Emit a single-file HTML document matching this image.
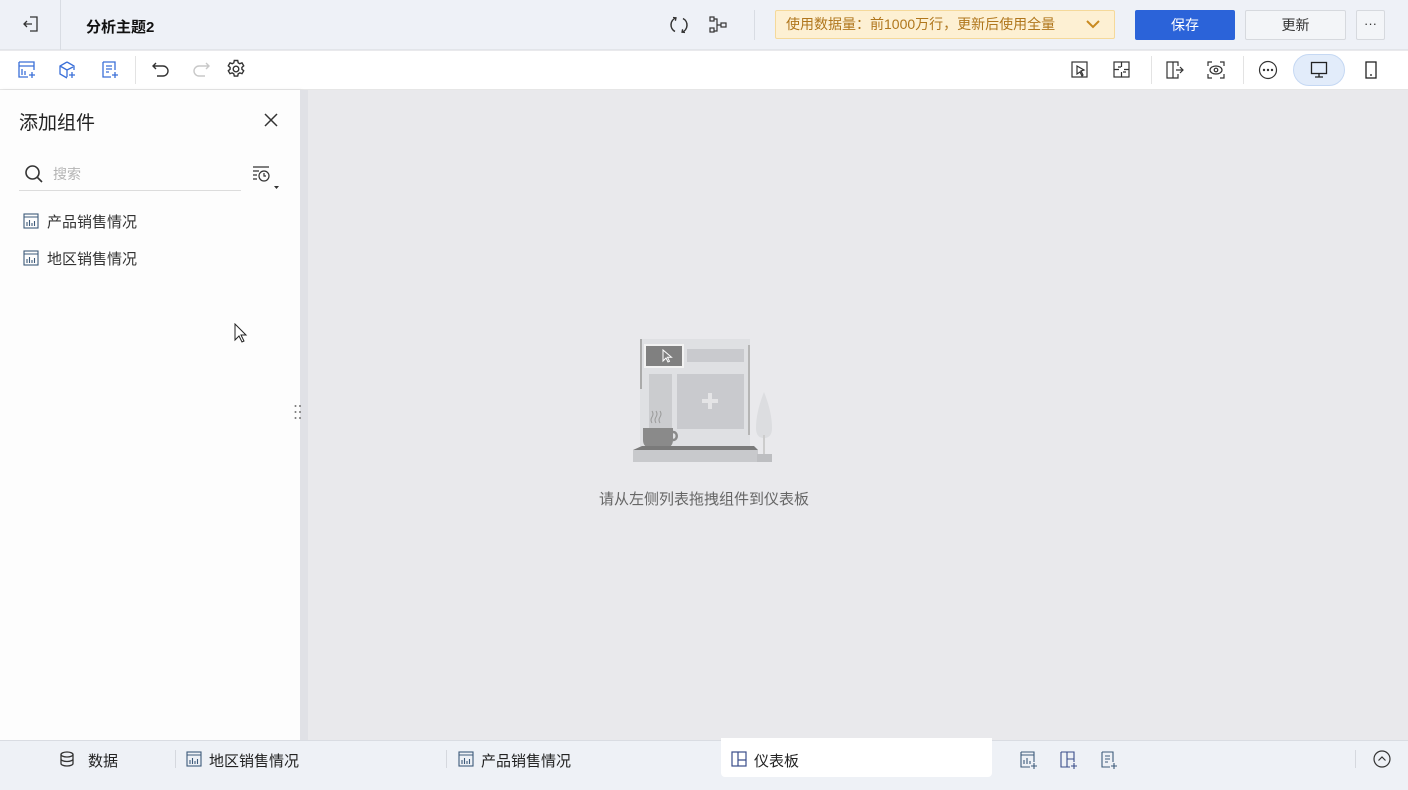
<!DOCTYPE html>
<html><head><meta charset="utf-8"><style>
*{box-sizing:border-box;margin:0;padding:0}
body{width:1408px;height:790px;overflow:hidden;font-family:"Liberation Sans","Noto Sans CJK SC",sans-serif;background:#e9e9ec;position:relative;color:#222}
.abs{position:absolute}
svg{display:block}
</style></head><body>
<!-- top bar -->
<div class="abs" style="left:0;top:0;width:1408px;height:50px;background:#eef1f7;border-bottom:1px solid #e2e5ea"></div>
<div class="abs" style="left:60px;top:0;width:1px;height:50px;background:#d8dce3"></div>
<svg class="abs" style="left:22px;top:15px" width="18" height="18" viewBox="0 0 18 18" fill="none" stroke="#333" stroke-width="1.3"><path d="M8 2h7v14H8M2 9h8M5 6L2 9l3 3"/></svg>
<div class="abs" style="left:86px;top:16px;font-size:15px;font-weight:bold;color:#111">分析主题2</div>
<svg class="abs" style="left:669px;top:15px" width="20" height="20" viewBox="0 0 20 20" fill="none" stroke="#333" stroke-width="1.5"><path d="M7 2.8A7.5 7.5 0 0 0 6 16.5M13 17.2A7.5 7.5 0 0 0 14 3.5"/><path d="M4 2.5l3 .3-.6 3M16 17.5l-3-.3.6-3" stroke-width="1.3"/></svg>
<svg class="abs" style="left:709px;top:16px" width="20" height="18" viewBox="0 0 20 18" fill="none" stroke="#333" stroke-width="1.2"><rect x="1" y="1" width="4" height="4"/><rect x="1" y="12" width="4" height="4"/><rect x="12" y="7" width="5" height="4"/><path d="M5 3h3v12H5M8 9h4"/></svg>
<div class="abs" style="left:754px;top:10px;width:1px;height:30px;background:#d8dce3"></div>
<div class="abs" style="left:775px;top:10px;width:340px;height:29px;background:#fdf0d3;border:1px solid #f5d99a;border-radius:2px;font-size:14px;color:#b0761c;line-height:27px;padding-left:10px">使用数据量：前1000万行，更新后使用全量
<svg class="abs" style="left:310px;top:8px" width="14" height="10" viewBox="0 0 14 10" fill="none" stroke="#c98a20" stroke-width="2"><path d="M1 2l6 6 6-6"/></svg></div>
<div class="abs" style="left:1135px;top:10px;width:100px;height:30px;background:#2b63d9;border-radius:2px;color:#fff;font-size:14px;text-align:center;line-height:30px">保存</div>
<div class="abs" style="left:1245px;top:10px;width:101px;height:30px;background:#f3f5f8;border:1px solid #d6d9de;border-radius:2px;color:#333;font-size:14px;text-align:center;line-height:28px">更新</div>
<div class="abs" style="left:1356px;top:10px;width:29px;height:30px;background:#f3f5f8;border:1px solid #d6d9de;border-radius:2px;color:#333;font-size:13px;text-align:center;line-height:26px">···</div>
<!-- toolbar -->
<div class="abs" style="left:0;top:51px;width:1408px;height:39px;background:#fff;border-bottom:1px solid #e6e6e6"></div>
<svg class="abs" style="left:17px;top:60px" width="20" height="20" viewBox="0 0 20 20" fill="none" stroke="#3a6fd8" stroke-width="1.3"><path d="M2 2h15v8M2 2v15h9M2 6h15M5 9v6M8 11v4M15 12v6M12 15h6"/></svg>
<svg class="abs" style="left:57px;top:60px" width="20" height="20" viewBox="0 0 20 20" fill="none" stroke="#3a6fd8" stroke-width="1.3"><path d="M10 2l7 4v4M10 2L3 6v8l7 4M3 6l7 4 6-3M10 10v7M15 12v6M12 15h6"/></svg>
<svg class="abs" style="left:100px;top:60px" width="20" height="20" viewBox="0 0 20 20" fill="none" stroke="#3a6fd8" stroke-width="1.3"><path d="M3 2h12v8M3 2v15h8M6 6h6M6 9h6M6 12h3M15 12v6M12 15h6"/></svg>
<div class="abs" style="left:135px;top:56px;width:1px;height:28px;background:#e3e3e3"></div>
<svg class="abs" style="left:151px;top:61px" width="20" height="18" viewBox="0 0 20 18" fill="none" stroke="#333" stroke-width="1.4"><path d="M5 2L2 5l3 3M2 5h10a5 5 0 0 1 0 10H6"/></svg>
<svg class="abs" style="left:191px;top:61px" width="20" height="18" viewBox="0 0 20 18" fill="none" stroke="#c8c8c8" stroke-width="1.4"><path d="M15 2l3 3-3 3M18 5H8a5 5 0 0 0 0 10h6"/></svg>
<svg class="abs" style="left:226px;top:59px" width="20" height="20" viewBox="0 0 20 20" fill="none" stroke="#333" stroke-width="1.4"><path d="M8.3 1.5h3.4l.5 2.3 1.6.9 2.2-.8 1.7 2.9-1.8 1.6v1.8l1.8 1.6-1.7 2.9-2.2-.8-1.6.9-.5 2.3H8.3l-.5-2.3-1.6-.9-2.2.8-1.7-2.9 1.8-1.6V8.4L2.3 6.8 4 3.9l2.2.8 1.6-.9z"/><circle cx="10" cy="10" r="2.8"/></svg>
<svg class="abs" style="left:1071px;top:61px" width="18" height="18" viewBox="0 0 18 18" fill="none" stroke="#333" stroke-width="1.2"><rect x="1" y="1" width="15" height="15"/><path d="M6 5l7 4-3 1 2 4-1 1-2-4-3 2z"/></svg>
<svg class="abs" style="left:1113px;top:61px" width="18" height="18" viewBox="0 0 18 18" fill="none" stroke="#333" stroke-width="1.2"><rect x="1" y="1" width="15" height="15"/><path d="M8.5 1v5M8.5 11v5M1 8.5h5M11 8.5h5M5 6h3M10 11h3"/></svg>
<div class="abs" style="left:1151px;top:56px;width:1px;height:28px;background:#e3e3e3"></div>
<svg class="abs" style="left:1165px;top:60px" width="20" height="20" viewBox="0 0 20 20" fill="none" stroke="#333" stroke-width="1.2"><path d="M8 2H2v16h6zM8 2h5v4M8 18h5v-4M11 10h7M15 7l3 3-3 3"/></svg>
<svg class="abs" style="left:1206px;top:60px" width="20" height="20" viewBox="0 0 20 20" fill="none" stroke="#333" stroke-width="1.2"><path d="M2 6V2h4M14 2h4v4M2 14v4h4M14 18h4v-4"/><ellipse cx="10" cy="10" rx="6" ry="4"/><circle cx="10" cy="10" r="1.8"/></svg>
<div class="abs" style="left:1243px;top:56px;width:1px;height:28px;background:#e3e3e3"></div>
<svg class="abs" style="left:1258px;top:60px" width="20" height="20" viewBox="0 0 20 20" fill="none" stroke="#333" stroke-width="1.2"><circle cx="10" cy="10" r="8.5"/><circle cx="6" cy="10" r=".6" fill="#333"/><circle cx="10" cy="10" r=".6" fill="#333"/><circle cx="14" cy="10" r=".6" fill="#333"/></svg>
<div class="abs" style="left:1293px;top:54px;width:52px;height:32px;background:#e2ecfa;border:1px solid #c5d8f3;border-radius:16px"></div>
<svg class="abs" style="left:1310px;top:61px" width="18" height="18" viewBox="0 0 18 18" fill="none" stroke="#222" stroke-width="1.3"><rect x="1.5" y="1.5" width="15" height="11"/><path d="M9 12.5v3M5 16h8"/></svg>
<svg class="abs" style="left:1364px;top:60px" width="14" height="20" viewBox="0 0 14 20" fill="none" stroke="#222" stroke-width="1.3"><rect x="2" y="2" width="10" height="16"/><path d="M6 15h2"/></svg>
<!-- left panel -->
<div class="abs" style="left:0;top:90px;width:300px;height:650px;background:#fdfdfd;box-shadow:2px 0 4px rgba(0,0,0,.06)"></div>
<div class="abs" style="left:300px;top:90px;width:8px;height:650px;background:#e0e1e6"></div>
<div class="abs" style="left:19px;top:108px;font-size:19px;color:#222">添加组件</div>
<svg class="abs" style="left:263px;top:112px" width="16" height="16" viewBox="0 0 16 16" stroke="#333" stroke-width="1.5"><path d="M2 2l12 12M14 2L2 14"/></svg>
<svg class="abs" style="left:24px;top:164px" width="20" height="20" viewBox="0 0 20 20" fill="none" stroke="#333" stroke-width="1.6"><circle cx="8.5" cy="8.5" r="6.5"/><path d="M13.5 13.5l4.5 4.5"/></svg>
<div class="abs" style="left:53px;top:164px;font-size:14px;color:#b4b4b4">搜索</div>
<div class="abs" style="left:19px;top:190px;width:222px;height:1px;background:#dcdcdc"></div>
<svg class="abs" style="left:252px;top:165px" width="30" height="26" viewBox="0 0 30 26" fill="none" stroke="#333" stroke-width="1.2"><path d="M1 2h16M1 6h6M1 10h4M1 14h4"/><circle cx="12" cy="11" r="5"/><path d="M12 8v3h2"/><path d="M22 21h5l-2.5 3z" fill="#333" stroke="none"/></svg>
<svg class="abs" style="left:23px;top:213px" width="16" height="16" viewBox="0 0 16 16" fill="none" stroke="#3d5a7a" stroke-width="1.1"><rect x="1" y="1" width="14" height="14"/><path d="M1 4h14M4 13V9M6.5 13V7M9 13v-3M11.5 13V8"/></svg>
<div class="abs" style="left:47px;top:211px;font-size:15px;color:#333">产品销售情况</div>
<svg class="abs" style="left:23px;top:250px" width="16" height="16" viewBox="0 0 16 16" fill="none" stroke="#3d5a7a" stroke-width="1.1"><rect x="1" y="1" width="14" height="14"/><path d="M1 4h14M4 13V9M6.5 13V7M9 13v-3M11.5 13V8"/></svg>
<div class="abs" style="left:47px;top:248px;font-size:15px;color:#333">地区销售情况</div>
<svg class="abs" style="left:234px;top:323px" width="16" height="22" viewBox="0 0 16 22"><path d="M1 1v16l4-4 3 6 2-1-3-6h5z" fill="#fff" stroke="#222"/></svg>
<svg class="abs" style="left:294px;top:404px" width="8" height="18" viewBox="0 0 8 18" fill="#777"><circle cx="1.5" cy="2" r="1"/><circle cx="6" cy="2" r="1"/><circle cx="1.5" cy="8" r="1"/><circle cx="6" cy="8" r="1"/><circle cx="1.5" cy="14" r="1"/><circle cx="6" cy="14" r="1"/></svg>
<!-- empty illustration -->
<svg class="abs" style="left:630px;top:335px" width="146" height="130" viewBox="0 0 146 130">
<rect x="10" y="4" width="110" height="112" fill="#dfe0e3"/>
<rect x="10" y="4" width="2" height="50" fill="#aaa"/>
<rect x="118" y="10" width="2" height="90" fill="#b5b5b5"/>
<rect x="15" y="10" width="38" height="22" fill="#808080" stroke="#f2f2f2" stroke-width="2"/>
<path d="M33 15v11l3-3 2 4 1.5-.7-2-4h4z" fill="none" stroke="#fff" stroke-width="1"/>
<rect x="57" y="14" width="57" height="13" fill="#c9cace"/>
<rect x="19" y="39" width="23" height="60" fill="#cbcccf"/>
<rect x="47" y="39" width="67" height="55" fill="#c9cace"/>
<path d="M80 58v16M72 66h16" stroke="#e4e4e6" stroke-width="4"/>
<path d="M22 88q-2-3 0-6t0-6M26 88q-2-3 0-6t0-6M30 88q-2-3 0-6t0-6" stroke="#999" fill="none"/>
<path d="M13 93h30v12c0 5-3 8-8 8H21c-5 0-8-3-8-8z" fill="#8a8a8a"/>
<path d="M43 97c5 0 5 8 0 8" stroke="#8a8a8a" stroke-width="2.5" fill="none"/>
<path d="M3 115h125l-4-4H12z" fill="#7a7a7a"/>
<rect x="3" y="115" width="125" height="12" fill="#c8c9cc"/>
<path d="M134 57q8 20 8 36 0 10-8 10-8 0-8-10 0-16 8-36z" fill="#dcdde0"/>
<rect x="133" y="100" width="2" height="20" fill="#ccc"/>
<rect x="127" y="119" width="15" height="8" fill="#bdbec1"/>
</svg>
<div class="abs" style="left:599px;top:488px;font-size:15px;color:#666">请从左侧列表拖拽组件到仪表板</div>
<!-- bottom bar -->
<div class="abs" style="left:0;top:740px;width:1408px;height:50px;background:#eef1f6;border-top:1px solid #d9dce2"></div>
<svg class="abs" style="left:59px;top:751px" width="16" height="16" viewBox="0 0 16 16" fill="none" stroke="#333" stroke-width="1.3"><ellipse cx="8" cy="3.5" rx="6" ry="2.5"/><path d="M2 3.5v9c0 1.4 2.7 2.5 6 2.5s6-1.1 6-2.5v-9M2 8c0 1.4 2.7 2.5 6 2.5s6-1.1 6-2.5"/></svg>
<div class="abs" style="left:88px;top:750px;font-size:15px;color:#222">数据</div>
<div class="abs" style="left:175px;top:750px;width:1px;height:18px;background:#d5d8de"></div>
<svg class="abs" style="left:186px;top:751px" width="16" height="16" viewBox="0 0 16 16" fill="none" stroke="#3d5a7a" stroke-width="1.1"><rect x="1" y="1" width="14" height="14"/><path d="M1 4h14M4 13V9M6.5 13V7M9 13v-3M11.5 13V8"/></svg>
<div class="abs" style="left:209px;top:750px;font-size:15px;color:#222">地区销售情况</div>
<div class="abs" style="left:446px;top:750px;width:1px;height:18px;background:#d5d8de"></div>
<svg class="abs" style="left:458px;top:751px" width="16" height="16" viewBox="0 0 16 16" fill="none" stroke="#3d5a7a" stroke-width="1.1"><rect x="1" y="1" width="14" height="14"/><path d="M1 4h14M4 13V9M6.5 13V7M9 13v-3M11.5 13V8"/></svg>
<div class="abs" style="left:481px;top:750px;font-size:15px;color:#222">产品销售情况</div>
<div class="abs" style="left:721px;top:738px;width:271px;height:39px;background:#fff;border-radius:0 0 4px 4px"></div>
<svg class="abs" style="left:731px;top:751px" width="16" height="16" viewBox="0 0 16 16" fill="none" stroke="#3a4d8a" stroke-width="1.2"><rect x="1" y="1" width="14" height="14"/><path d="M7 1v14M7 9h8"/></svg>
<div class="abs" style="left:754px;top:750px;font-size:15px;color:#222">仪表板</div>
<svg class="abs" style="left:1019px;top:750px" width="20" height="20" viewBox="0 0 20 20" fill="none" stroke="#3d5a7a" stroke-width="1.1"><path d="M2 2h13v10M2 2v15h9M2 5h13M5 14v-4M8 14V8M11 14v-3M15 13v6M12 16h6"/></svg>
<svg class="abs" style="left:1059px;top:750px" width="20" height="20" viewBox="0 0 20 20" fill="none" stroke="#3a4d8a" stroke-width="1.1"><path d="M2 2h13v10M2 2v15h9M8 2v15M8 9h7M15 13v6M12 16h6"/></svg>
<svg class="abs" style="left:1099px;top:750px" width="20" height="20" viewBox="0 0 20 20" fill="none" stroke="#3d5a7a" stroke-width="1.1"><path d="M3 2h11v10M3 2v15h8M6 6h5M6 9h5M6 12h3M15 13v6M12 16h6"/></svg>
<div class="abs" style="left:1355px;top:750px;width:1px;height:18px;background:#d5d8de"></div>
<svg class="abs" style="left:1373px;top:750px" width="18" height="18" viewBox="0 0 18 18" fill="none" stroke="#333" stroke-width="1.2"><circle cx="9" cy="9" r="8"/><path d="M5.5 10.5L9 7l3.5 3.5"/></svg>
</body></html>
